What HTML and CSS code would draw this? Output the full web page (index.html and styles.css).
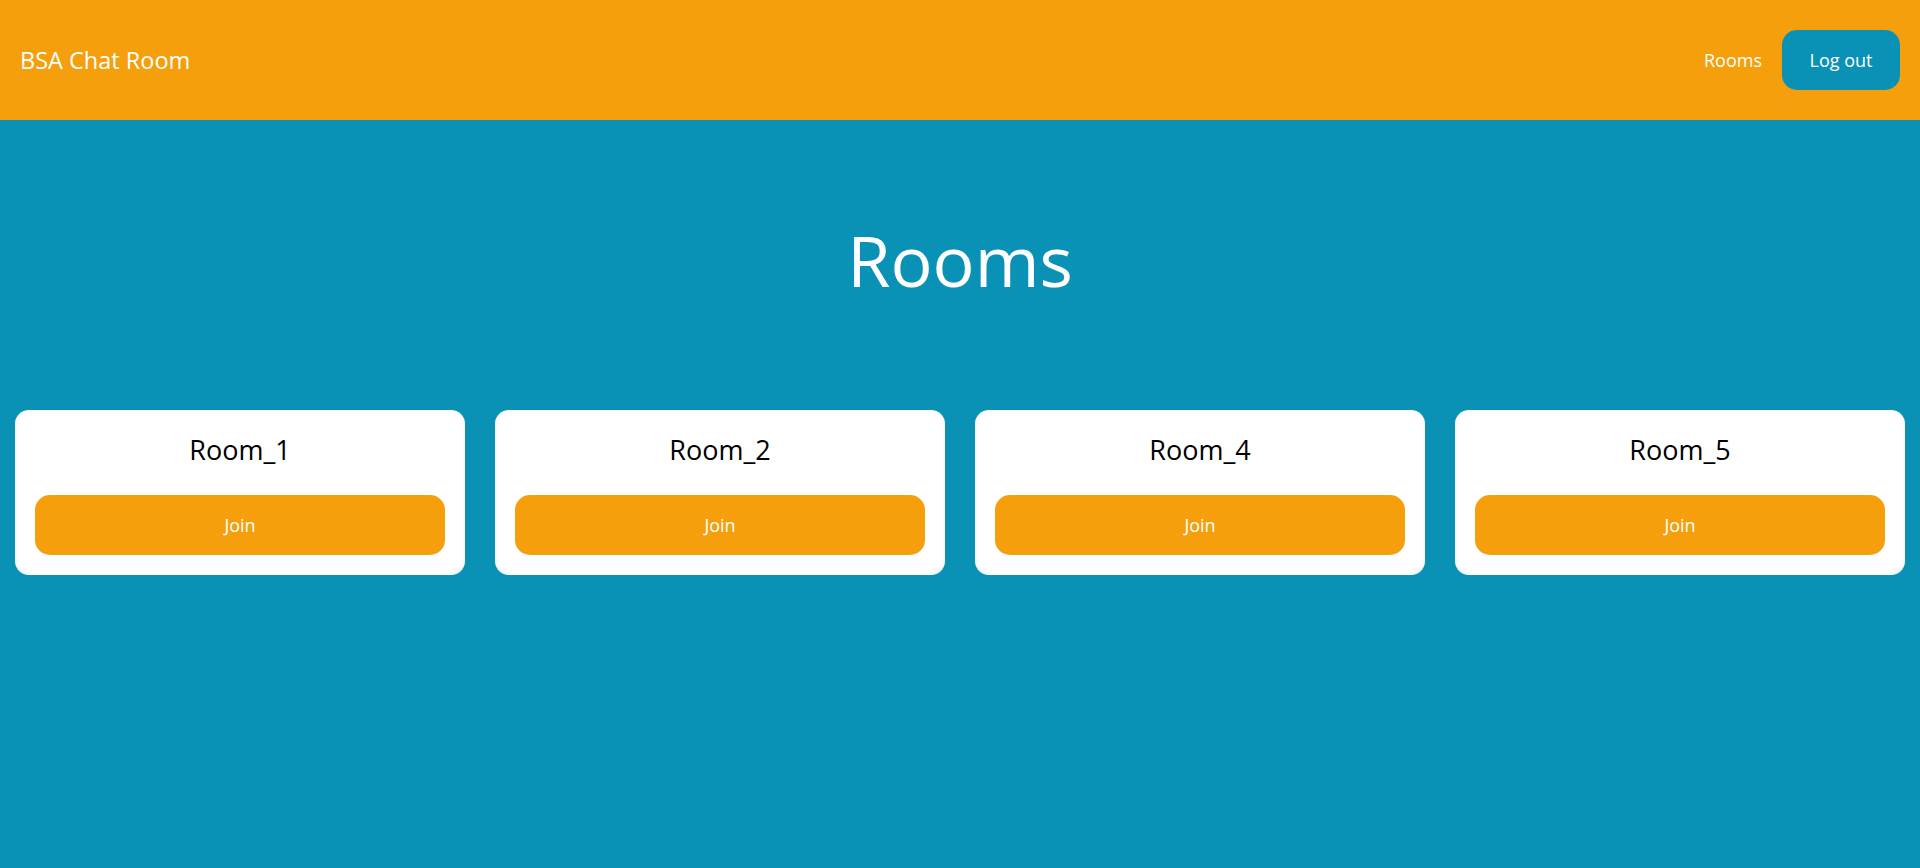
FILE: index.html
```html
<!DOCTYPE html>
<html lang="en">
<head>
<meta charset="utf-8">
<title>BSA Chat Room</title>
<link rel="stylesheet" href="styles.css">
</head>
<body>
<header class="navbar">
  <a class="brand" href="#">BSA Chat Room</a>
  <nav class="nav">
    <a class="nav-link" href="#">Rooms</a>
    <button class="logout">Log out</button>
  </nav>
</header>
<main class="main">
  <h1 class="title">Rooms</h1>
  <section class="rooms">
    <div class="card"><h2 class="card-title">Room_1</h2><button class="join">Join</button></div>
    <div class="card"><h2 class="card-title">Room_2</h2><button class="join">Join</button></div>
    <div class="card"><h2 class="card-title">Room_4</h2><button class="join">Join</button></div>
    <div class="card"><h2 class="card-title">Room_5</h2><button class="join">Join</button></div>
  </section>
</main>
</body>
</html>
```

FILE: styles.css
```css
* { box-sizing: border-box; }
html, body { margin: 0; padding: 0; height: 100%; }
body {
  background: #0a92b6;
  font-family: "Open Sans", "Noto Sans", sans-serif;
  color: #fff;
}
.navbar {
  height: 120px;
  background: #f49f0b;
  display: flex;
  align-items: center;
  justify-content: space-between;
  padding: 0 20px 0 20px;
}
.brand {
  color: #fff;
  text-decoration: none;
  font-size: 23.5px;
}
.nav {
  display: flex;
  align-items: center;
  gap: 20px;
}
.nav-link {
  color: #fff;
  text-decoration: none;
  font-size: 18px;
}
.logout {
  width: 118px;
  height: 60px;
  border: none;
  border-radius: 15px;
  background: #0a92b6;
  color: #fff;
  font-family: inherit;
  font-size: 18px;
}
.main {
  display: flex;
  flex-direction: column;
}
.title {
  margin: 0;
  padding-top: 98px;
  text-align: center;
  font-weight: 400;
  font-size: 70px;
  line-height: 1.2;
}
.rooms {
  display: grid;
  grid-template-columns: repeat(4, 1fr);
  gap: 30px;
  padding: 0 15px;
  margin-top: 108px;
}
.card {
  background: #fff;
  border-radius: 14px;
  padding: 20px;
  display: flex;
  flex-direction: column;
  align-items: stretch;
}
.card-title {
  margin: 0 0 25px;
  text-align: center;
  color: #000;
  font-weight: 500;
  font-size: 27px;
  line-height: 40px;
}
.join {
  height: 60px;
  border: none;
  border-radius: 15px;
  background: #f49f0b;
  color: #fff;
  font-family: inherit;
  font-size: 18px;
}
```
